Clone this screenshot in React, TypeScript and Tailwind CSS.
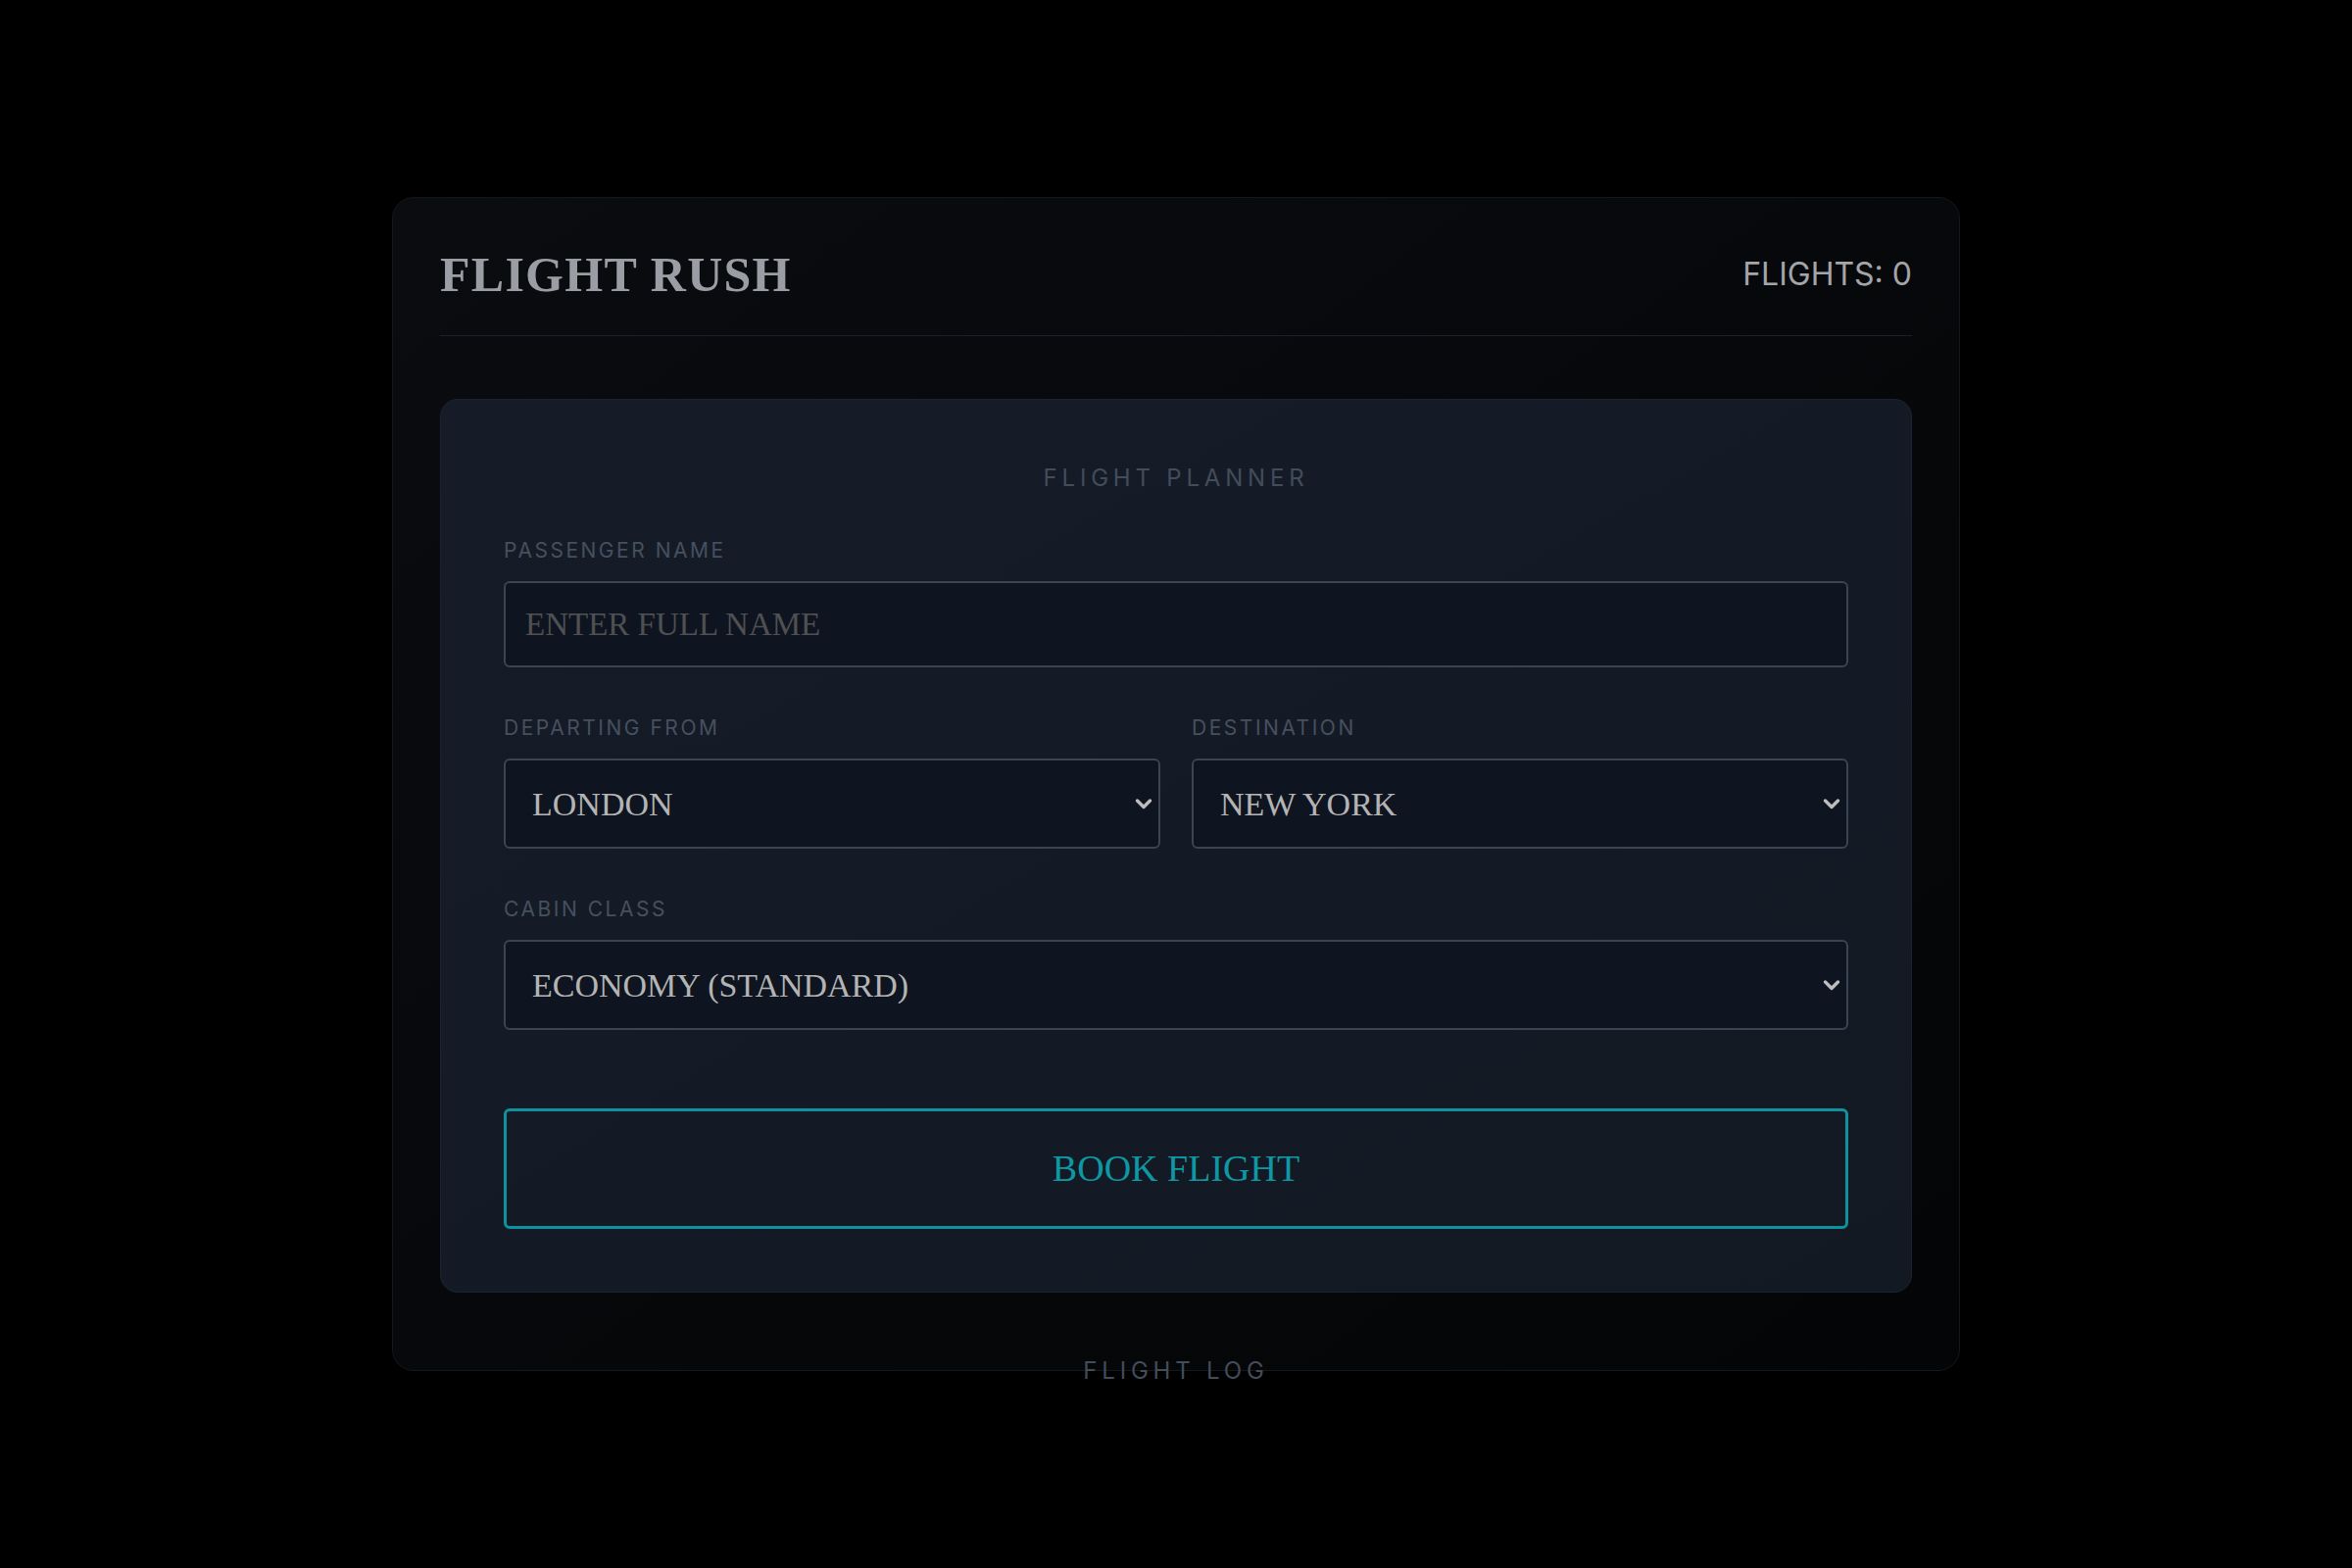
import React, { useState } from 'react';

const serif = "font-['Liberation_Serif',serif]";
const sans = "font-['Inter',sans-serif]";

const CITIES = ['LONDON', 'NEW YORK', 'PARIS', 'TOKYO', 'DUBAI', 'SYDNEY'];
const CABINS = ['ECONOMY (STANDARD)', 'PREMIUM ECONOMY', 'BUSINESS', 'FIRST CLASS'];

const Chevron: React.FC = () => (
  <svg
    className="pointer-events-none absolute right-[8px] top-1/2 -translate-y-1/2"
    width="18"
    height="13"
    viewBox="0 0 18 13"
    fill="none"
  >
    <path d="M2.5 3.5 L9 10 L15.5 3.5" stroke="#bdbdbd" strokeWidth="3.4" strokeLinecap="round" strokeLinejoin="round" />
  </svg>
);

const FieldLabel: React.FC<{ children: React.ReactNode }> = ({ children }) => (
  <label className={`${sans} mb-[17px] block text-[21px] leading-[28px] tracking-[0.12em] text-[#46505e]`}>
    {children}
  </label>
);

const Select: React.FC<{ value: string; options: string[]; onChange: (v: string) => void }> = ({ value, options, onChange }) => (
  <div className="relative">
    <select
      value={value}
      onChange={e => onChange(e.target.value)}
      className={`${serif} h-[92px] w-full appearance-none rounded-md border-2 border-[#3b4452] bg-[#0f1520] pl-[27px] pr-12 text-[34px] text-[#b4b4b4] outline-none`}
    >
      {options.map(o => (
        <option key={o} value={o}>{o}</option>
      ))}
    </select>
    <Chevron />
  </div>
);

const App: React.FC = () => {
  const [name, setName] = useState('');
  const [from, setFrom] = useState('LONDON');
  const [to, setTo] = useState('NEW YORK');
  const [cabin, setCabin] = useState('ECONOMY (STANDARD)');
  const [flights, setFlights] = useState(0);

  return (
    <div className="flex min-h-screen items-center justify-center bg-black">
      <div className="h-[1198px] w-[1600px] rounded-[22px] border border-[#15171b] bg-gradient-to-br from-[#0a0c10] to-[#040506] px-12 pt-12">
        {/* header */}
        <div className="flex items-center justify-between border-b border-[#1d2129] pb-8">
          <h1 className={`${serif} text-[50px] font-bold leading-[60px] tracking-wide text-[#9a9da3]`}>FLIGHT RUSH</h1>
          <div className={`${sans} text-[32px] text-[#a3a5a9]`}>FLIGHTS: {flights}</div>
        </div>

        {/* planner */}
        <div className="mt-16 rounded-[18px] border border-[#1c2330] bg-gradient-to-br from-[#151c28] to-[#131923] p-16">
          <h2 className={`${sans} mb-[44px] text-center text-[24px] leading-[32px] tracking-[0.2em] text-[#434c5a]`}>
            FLIGHT PLANNER
          </h2>

          <div className="mb-12">
            <FieldLabel>PASSENGER NAME</FieldLabel>
            <input
              value={name}
              onChange={e => setName(e.target.value)}
              placeholder="ENTER FULL NAME"
              className={`${serif} h-[88px] w-full rounded-md border-2 border-[#3b4452] bg-[#0f1520] px-5 text-[33px] text-[#b4b4b4] outline-none placeholder:text-[#4f5052]`}
            />
          </div>

          <div className="mb-12 grid grid-cols-2 gap-8">
            <div>
              <FieldLabel>DEPARTING FROM</FieldLabel>
              <Select value={from} options={CITIES} onChange={setFrom} />
            </div>
            <div>
              <FieldLabel>DESTINATION</FieldLabel>
              <Select value={to} options={CITIES} onChange={setTo} />
            </div>
          </div>

          <div>
            <FieldLabel>CABIN CLASS</FieldLabel>
            <Select value={cabin} options={CABINS} onChange={setCabin} />
          </div>

          <button
            onClick={() => setFlights(f => f + 1)}
            className={`${serif} mt-20 flex h-[123px] w-full items-center justify-center rounded-md border-[3px] border-[#0e929d] bg-transparent text-[38px] text-[#0e98a4]`}
          >
            BOOK FLIGHT
          </button>
        </div>

        {/* log */}
        <h2 className={`${sans} mt-16 text-center text-[24px] leading-[32px] tracking-[0.2em] text-[#434c5a]`}>
          FLIGHT LOG
        </h2>
      </div>
    </div>
  );
};

export default App;
